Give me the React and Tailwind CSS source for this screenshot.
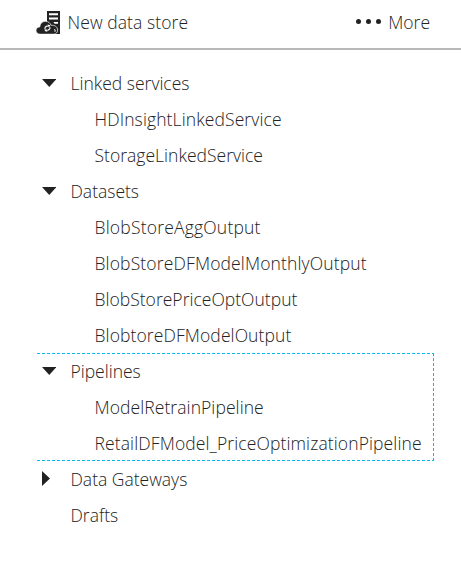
const sections = [
  {
    label: 'Linked services',
    state: 'open',
    items: [
      { name: 'HDInsightLinkedService', tracking: 'tracking-[0.11px]' },
      { name: 'StorageLinkedService', tracking: 'tracking-[0.02px]' },
    ],
  },
  {
    label: 'Datasets',
    state: 'open',
    items: [
      { name: 'BlobStoreAggOutput', tracking: 'tracking-[0.2px]' },
      { name: 'BlobStoreDFModelMonthlyOutput', tracking: 'tracking-[0.14px]' },
      { name: 'BlobStorePriceOptOutput', tracking: 'tracking-[0.02px]' },
      { name: 'BlobtoreDFModelOutput', tracking: 'tracking-[0.1px]' },
    ],
  },
  {
    label: 'Pipelines',
    state: 'open',
    outlined: true,
    items: [
      { name: 'ModelRetrainPipeline', tracking: 'tracking-[0.08px]' },
      { name: 'RetailDFModel_PriceOptimizationPipeline', tracking: 'tracking-[0.12px]' },
    ],
  },
  { label: 'Data Gateways', state: 'closed', items: [] },
  { label: 'Drafts', items: [] },
];

function DataStoreIcon() {
  return (
    <svg width="24" height="23" viewBox="0 0 24 23">
      <path fill="#222" d="M11 0h13v23h-7L11 11z" />
      <path fill="#fff" d="M13 2.3h9v2h-9zM13 6.5h9v2h-9zM17.5 11H22v1.7h-3.5z" />
      <path
        fill="#222"
        stroke="#fff"
        strokeWidth="0.7"
        d="M4.5 23.2C1.8 23.2 0 21.6 0 19.4c0-2.1 1.5-3.4 3.8-3.5.2-3.2 2.4-5.6 5.6-5.6 2.8 0 4.8 1.5 5.6 4 3.8-.3 6.6 1.6 6.6 4.7 0 2.5-1.6 4.2-4 4.2z"
      />
      <path
        fill="none"
        stroke="#fff"
        strokeWidth="1.1"
        d="M9.2 18.4c-.9-1.6.4-3.4 2.6-3.3M13.7 15.9c.9 1.6-.4 3.4-2.6 3.3"
      />
      <path fill="#fff" d="M11.4 13.4l3 .8-1.6 2.3zM11.5 20.8l-3-.8 1.6-2.3zM17.8 17.8l2 1.2-.6 2-.8-.2.3-1.4z" />
    </svg>
  );
}

function Arrow({ state }) {
  if (state === 'open') {
    return (
      <svg width="14" height="8" viewBox="0 0 14 8" className="ml-[5px] -mt-0.5">
        <path fill="#222" d="M0 0h14.5L7.25 8z" />
      </svg>
    );
  }
  if (state === 'closed') {
    return (
      <svg width="8" height="15" viewBox="0 0 8 15" className="ml-[5px] -mt-[3px]">
        <path fill="#222" d="M0 0l8 7.5L0 15z" />
      </svg>
    );
  }
  return null;
}

function Section({ label, state, outlined, items }) {
  return (
    <section className="relative">
      <div className="flex h-9 items-center">
        <span className="flex w-[33.5px] shrink-0 items-center">
          <Arrow state={state} />
        </span>
        <span className="pb-0.5">{label}</span>
      </div>
      {items.map(({ name, tracking }) => (
        <div key={name} className="flex h-9 items-center pb-0.5 pl-[57.5px]">
          <span className={tracking}>{name}</span>
        </div>
      ))}
      {outlined && (
        <svg
          className="pointer-events-none absolute -top-px left-0"
          width="397"
          height="109"
          fill="none"
          stroke="#00b9ed"
          strokeDasharray="3 2"
        >
          <path d="M0 .5h397M396.5 0v108M0 107.5h397" />
        </svg>
      )}
    </section>
  );
}

export default function App() {
  return (
    <main className="h-[584px] w-[461px] overflow-hidden bg-white font-['Open_Sans','Noto_Sans',sans-serif] text-[17.5px] font-light leading-6 whitespace-nowrap text-[#222]">
      <header className="flex h-[50px] items-center justify-between border-b-2 border-[#b8b8b8] pr-[31px] pb-[3px] pl-9">
        <div className="flex items-center gap-[7.5px]">
          <DataStoreIcon />
          <span className="pb-0.5 tracking-[0.08px]">New data store</span>
        </div>
        <div className="flex items-center gap-[7px]">
          <span className="-mt-[3px] flex gap-[5px]">
            <i className="size-[5px] rounded-full bg-[#222]" />
            <i className="size-[5px] rounded-full bg-[#222]" />
            <i className="size-[5px] rounded-full bg-[#222]" />
          </span>
          <span className="pb-0.5">More</span>
        </div>
      </header>
      <nav className="pt-4 pl-[37px]">
        {sections.map((section) => (
          <Section key={section.label} {...section} />
        ))}
      </nav>
    </main>
  );
}
